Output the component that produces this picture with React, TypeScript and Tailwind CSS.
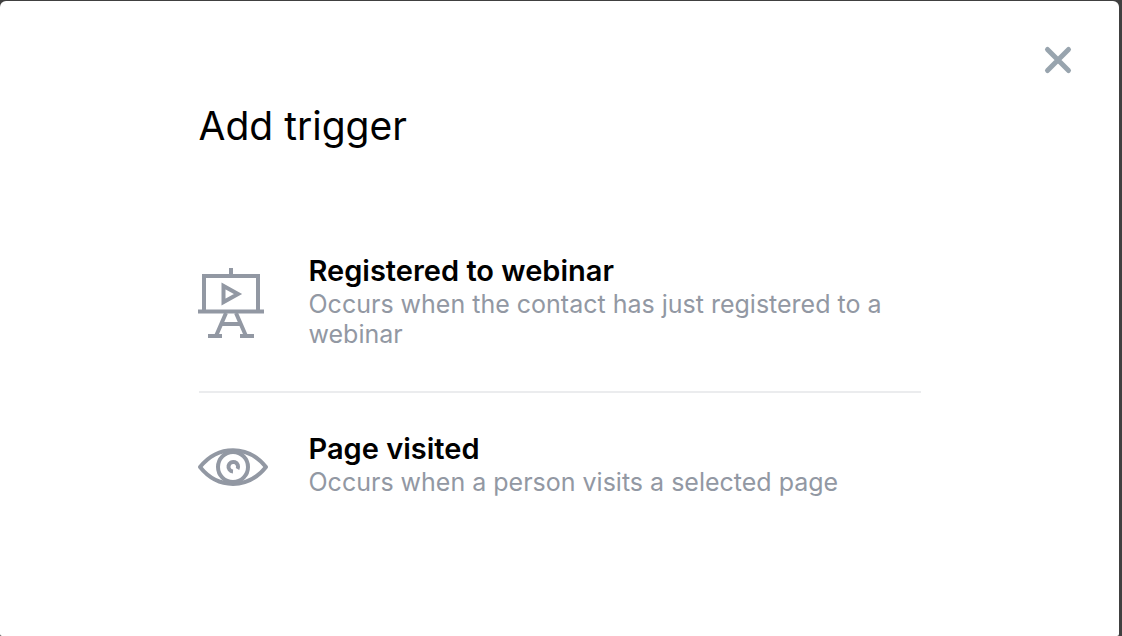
import React from "react";

const WebinarIcon = () => (
  <svg
    className="w-[68px] h-[72px] text-[#9298a3]"
    viewBox="0 0 68 72"
    fill="none"
    stroke="currentColor"
    strokeWidth="4"
    overflow="visible"
    aria-hidden="true"
  >
    <path d="M32 0V8" />
    <path d="M5 43V8H59V43" />
    <path d="M-1 43.5H65" />
    <path d="M24.5 18V34L39 26Z" />
    <path d="M27 45L17 68M37 45L47 68" />
    <path d="M22 56H42" />
    <path d="M9 68H23M41 68H55" />
  </svg>
);

const EyeIcon = () => (
  <svg
    className="w-[70px] h-[38px] text-[#9298a3]"
    viewBox="1 0 70 38"
    fill="none"
    stroke="currentColor"
    strokeWidth="4"
    strokeLinejoin="round"
    overflow="visible"
    aria-hidden="true"
  >
    <path d="M2 19C20 -3.5 50 -3.5 68 19C50 41.5 20 41.5 2 19Z" />
    <circle cx="35" cy="19" r="15" />
    <path d="M39.5 21A4.8 4.8 0 1 0 35 23.5" />
  </svg>
);

const triggers = [
  {
    title: "Registered to webinar",
    description: "Occurs when the contact has just registered to a webinar",
    icon: <WebinarIcon />,
  },
  {
    title: "Page visited",
    description: "Occurs when a person visits a selected page",
    icon: <EyeIcon />,
  },
];

const App = () => {
  return (
    <div className="min-h-screen flex bg-[#404040] pt-px pr-[3px] font-['Inter',sans-serif]">
      <div
        role="dialog"
        aria-labelledby="dialog-title"
        className="flex-1 rounded-t-md rounded-b-xs bg-white px-12 pt-[45px] pb-12"
      >
        {/* Close */}
        <div className="flex justify-end">
          <button type="button" aria-label="Close" className="text-[#98a4ae]">
            <svg
              className="w-[27px] h-7"
              viewBox="0 0 27 28"
              fill="none"
              stroke="currentColor"
              strokeWidth="5"
              strokeLinecap="round"
              overflow="visible"
            >
              <path d="M3.5 3.5L24.5 24.5M24.5 3.5L3.5 24.5" />
            </svg>
          </button>
        </div>

        <div className="max-w-[722px] mx-auto">
          <h1 id="dialog-title" className="mt-7 text-[39px] leading-12 text-black">
            Add trigger
          </h1>

          {/* Trigger list */}
          <ul className="mt-[65px] divide-y-2 divide-[#ebecee]">
            {triggers.map((trigger) => (
              <li key={trigger.title}>
                <button
                  type="button"
                  className="w-full flex items-center pt-[38px] pb-[42px] text-left"
                >
                  <span className="w-[110px] shrink-0 pt-1.5">
                    {trigger.icon}
                  </span>
                  <span className="flex-1">
                    <span className="block text-[29px] leading-9 font-semibold text-black">
                      {trigger.title}
                    </span>
                    <span className="block text-[25px] leading-[30px] text-[#9298a3]">
                      {trigger.description}
                    </span>
                  </span>
                </button>
              </li>
            ))}
          </ul>
        </div>
      </div>
    </div>
  );
};

export default App;
